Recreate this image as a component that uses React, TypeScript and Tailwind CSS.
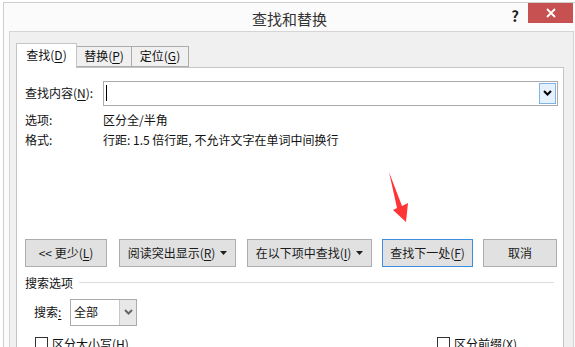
import React from "react";

const font = { fontFamily: '"Noto Sans CJK SC", "Noto Sans", sans-serif' };

function Chevron({ className }: { className?: string }) {
  return (
    <svg width="9" height="6" viewBox="0 0 9 6" className={className}>
      <polyline points="1,1 4.5,4.5 8,1" fill="none" stroke="currentColor" strokeWidth="2" />
    </svg>
  );
}

function Caret() {
  return (
    <svg width="7" height="4" viewBox="0 0 7 4" className="ml-[5px] text-[#1e1e1e]">
      <polygon points="0,0 7,0 3.5,4" fill="currentColor" />
    </svg>
  );
}

function Btn({ children, w, primary }: { children: React.ReactNode; w: string; primary?: boolean }) {
  return (
    <div
      className={`${w} h-[28px] flex items-center justify-center bg-[#e1e1e1] border ${
        primary ? "border-[#3c8fdf]" : "border-[#adadad]"
      } text-[12px] text-[#1a1a1a]`}
    >
      {children}
    </div>
  );
}

export default function App() {
  return (
    <div className="w-[575px] h-[347px] overflow-hidden bg-white" style={font}>
      <div className="ml-[3px] mt-[2px] w-[572px] h-[345px] border-l border-t border-[#cfcfcf] bg-[#fbfbfb] flex flex-col">
        {/* title bar */}
        <div className="h-[29px] flex items-start relative">
          <div className="flex-1 pt-[5px] text-center text-[15px] text-[#333]">查找和替换</div>
          <div className="absolute right-[56px] top-[2px] text-[15px] font-bold text-[#222]">?</div>
          <div className="absolute right-[2px] top-0 w-[45px] h-[20px] bg-[#c75050] flex items-center justify-center">
            <svg width="10" height="10" viewBox="0 0 10 10">
              <path d="M1 1 L9 9 M9 1 L1 9" stroke="white" strokeWidth="1.8" />
            </svg>
          </div>
        </div>
        {/* body */}
        <div className="flex-1 ml-[5px] w-[565px] border-l border-t border-r border-[#d5d5d5] bg-[#f0f0f0] pl-[6px] pt-[11px] flex flex-col">
          {/* tabs */}
          <div className="flex items-end h-[25px] relative z-10">
            <div className="w-[61px] h-[25px] bg-white border border-b-0 border-[#c5c5c5] flex items-center justify-center text-[12px] text-[#111] pb-[1px]">
              查找(<u className="underline-offset-2">D</u>)
            </div>
            <div className="w-[55px] h-[21px] mb-[1px] bg-[#f0f0f0] border border-l-0 border-[#acacac] flex items-center justify-center text-[12px] text-[#111]">
              替换(<u className="underline-offset-2">P</u>)
            </div>
            <div className="w-[57px] h-[21px] mb-[1px] bg-[#f0f0f0] border border-l-0 border-[#acacac] flex items-center justify-center text-[12px] text-[#111]">
              定位(<u className="underline-offset-2">G</u>)
            </div>
          </div>
          {/* panel */}
          <div className="-mt-[1px] w-[548px] flex-1 bg-white border border-[#c5c5c5] pl-[8px] pr-[5px] pt-[13px] relative text-[12px] text-[#111]">
            <div className="flex items-center h-[25px]">
              <div className="w-[78px]">
                查找内容(<u className="underline-offset-2">N</u>):
              </div>
              <div className="flex-1 h-[25px] border border-[#ababab] flex items-stretch">
                <div className="flex-1 flex items-center pl-[2px]">
                  <div className="w-px h-[16px] bg-black" />
                </div>
                <div className="w-[17px] m-px bg-[#e5f1fb] border border-[#7eb4ea] flex items-center justify-center text-black">
                  <Chevron />
                </div>
              </div>
            </div>
            <div className="flex h-[16px] mt-[6px] items-center">
              <div className="w-[78px]">选项:</div>
              <div>区分全/半角</div>
            </div>
            <div className="flex h-[16px] mt-[4px] items-center">
              <div className="w-[78px]">格式:</div>
              <div>行距: 1.5 倍行距, 不允许文字在单词中间换行</div>
            </div>

            <svg
              width="24"
              height="56"
              viewBox="0 0 24 56"
              className="absolute left-[370px] top-[102px]"
            >
              <polygon points="2,2 15,36 21,33 19,52 6,40 10,38" fill="#ff3535" />
            </svg>

            <div className="flex mt-[91px]">
              <Btn w="w-[82px]">
                &lt;&lt; 更少(<u className="underline-offset-2">L</u>)
              </Btn>
              <div className="ml-[12px]">
                <Btn w="w-[117px]">
                  阅读突出显示(<u className="underline-offset-2">R</u>)
                  <Caret />
                </Btn>
              </div>
              <div className="ml-[11px]">
                <Btn w="w-[125px]">
                  在以下项中查找(<u className="underline-offset-2">I</u>)
                  <Caret />
                </Btn>
              </div>
              <div className="ml-[10px]">
                <Btn w="w-[91px]" primary>
                  查找下一处(<u className="underline-offset-2">F</u>)
                </Btn>
              </div>
              <div className="ml-[10px]">
                <Btn w="w-[74px]">取消</Btn>
              </div>
            </div>

            <div className="flex items-center h-[16px] mt-[8px]">
              <div>搜索选项</div>
              <div className="flex-1 h-px bg-[#dcdcdc] ml-[6px] mr-[4px]" />
            </div>

            <div className="flex items-center mt-[8px] pl-[9px]">
              <div className="w-[36px]">
                搜索<u className="underline-offset-2">:</u>
              </div>
              <div className="w-[67px] h-[27px] border border-[#ababab] flex items-stretch">
                <div className="flex-1 flex items-center pl-[3px]">全部</div>
                <div className="w-[17px] bg-[#e8e8e8] border-l border-[#c8c8c8] flex items-center justify-center text-[#666]">
                  <Chevron />
                </div>
              </div>
            </div>

            <div className="flex items-center mt-[9px] pl-[10px]">
              <div className="flex items-center w-[402px]">
                <div className="w-[13px] h-[13px] border border-[#333] bg-white" />
                <div className="ml-[4px]">
                  区分大小写(<u className="underline-offset-2">H</u>)
                </div>
              </div>
              <div className="flex items-center">
                <div className="w-[13px] h-[13px] border border-[#333] bg-white" />
                <div className="ml-[4px]">
                  区分前缀(<u className="underline-offset-2">X</u>)
                </div>
              </div>
            </div>
          </div>
        </div>
      </div>
    </div>
  );
}
